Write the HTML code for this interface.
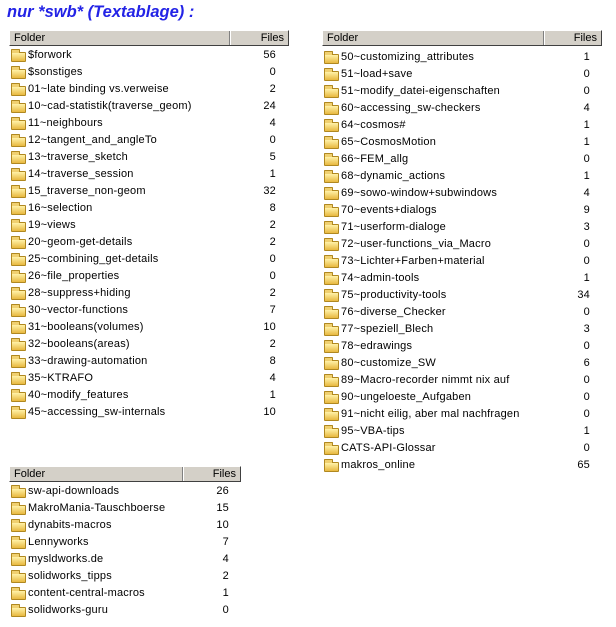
<!DOCTYPE html>
<html><head><style>
body{margin:0;width:616px;height:627px;background:#fff;position:relative;font-family:"Liberation Sans",Tahoma,sans-serif;font-size:11px;color:#000;overflow:hidden}
h1{position:absolute;left:7px;top:3px;margin:0;font:italic bold 16.5px "Liberation Sans",sans-serif;color:#2323e6}
.t{position:absolute}
.hd{height:16px;background:#d4d0c8;border-top:1px solid #fff;border-left:1px solid #fff;border-bottom:1px solid #404040;border-right:1px solid #404040;box-sizing:border-box;position:relative;line-height:14px}
.hd .f{position:absolute;left:4px;top:0}
.hd .n{position:absolute;right:4px;top:0}
.hd .d{position:absolute;top:0;bottom:0;width:1px;background:#808080;border-right:1px solid #fff}
.r{height:17px;line-height:17px;position:relative;white-space:nowrap;letter-spacing:0.2px}
.r i{position:absolute;left:2px;top:5px;width:15px;height:10px;background:linear-gradient(#fff2a8,#e8b840);border:1px solid #b08820;border-radius:1px;box-sizing:border-box}
.r i:before{content:"";position:absolute;left:-1px;top:-4px;width:7px;height:3px;background:#f0d070;border:1px solid #b08820;border-bottom:none;border-radius:1px 1px 0 0}
.r span{position:absolute;left:19px}
.r b{font-weight:normal;position:absolute}
</style></head><body>
<h1>nur *swb* (Textablage) :</h1>

<div class="t" style="left:9px;top:30px;width:280px">
<div class="hd"><span class="f">Folder</span><span class="d" style="left:219px"></span><span class="n">Files</span></div>
<div style="margin-top:1px">
<div class="r"><i></i><span>$forwork</span><b style="right:13px">56</b></div>
<div class="r"><i></i><span>$sonstiges</span><b style="right:13px">0</b></div>
<div class="r"><i></i><span>01~late binding vs.verweise</span><b style="right:13px">2</b></div>
<div class="r"><i></i><span>10~cad-statistik(traverse_geom)</span><b style="right:13px">24</b></div>
<div class="r"><i></i><span>11~neighbours</span><b style="right:13px">4</b></div>
<div class="r"><i></i><span>12~tangent_and_angleTo</span><b style="right:13px">0</b></div>
<div class="r"><i></i><span>13~traverse_sketch</span><b style="right:13px">5</b></div>
<div class="r"><i></i><span>14~traverse_session</span><b style="right:13px">1</b></div>
<div class="r"><i></i><span>15_traverse_non-geom</span><b style="right:13px">32</b></div>
<div class="r"><i></i><span>16~selection</span><b style="right:13px">8</b></div>
<div class="r"><i></i><span>19~views</span><b style="right:13px">2</b></div>
<div class="r"><i></i><span>20~geom-get-details</span><b style="right:13px">2</b></div>
<div class="r"><i></i><span>25~combining_get-details</span><b style="right:13px">0</b></div>
<div class="r"><i></i><span>26~file_properties</span><b style="right:13px">0</b></div>
<div class="r"><i></i><span>28~suppress+hiding</span><b style="right:13px">2</b></div>
<div class="r"><i></i><span>30~vector-functions</span><b style="right:13px">7</b></div>
<div class="r"><i></i><span>31~booleans(volumes)</span><b style="right:13px">10</b></div>
<div class="r"><i></i><span>32~booleans(areas)</span><b style="right:13px">2</b></div>
<div class="r"><i></i><span>33~drawing-automation</span><b style="right:13px">8</b></div>
<div class="r"><i></i><span>35~KTRAFO</span><b style="right:13px">4</b></div>
<div class="r"><i></i><span>40~modify_features</span><b style="right:13px">1</b></div>
<div class="r"><i></i><span>45~accessing_sw-internals</span><b style="right:13px">10</b></div>
</div></div>

<div class="t" style="left:322px;top:30px;width:280px">
<div class="hd"><span class="f">Folder</span><span class="d" style="left:220px"></span><span class="n">Files</span></div>
<div style="margin-top:3px">
<div class="r"><i></i><span>50~customizing_attributes</span><b style="right:12px">1</b></div>
<div class="r"><i></i><span>51~load+save</span><b style="right:12px">0</b></div>
<div class="r"><i></i><span>51~modify_datei-eigenschaften</span><b style="right:12px">0</b></div>
<div class="r"><i></i><span>60~accessing_sw-checkers</span><b style="right:12px">4</b></div>
<div class="r"><i></i><span>64~cosmos#</span><b style="right:12px">1</b></div>
<div class="r"><i></i><span>65~CosmosMotion</span><b style="right:12px">1</b></div>
<div class="r"><i></i><span>66~FEM_allg</span><b style="right:12px">0</b></div>
<div class="r"><i></i><span>68~dynamic_actions</span><b style="right:12px">1</b></div>
<div class="r"><i></i><span>69~sowo-window+subwindows</span><b style="right:12px">4</b></div>
<div class="r"><i></i><span>70~events+dialogs</span><b style="right:12px">9</b></div>
<div class="r"><i></i><span>71~userform-dialoge</span><b style="right:12px">3</b></div>
<div class="r"><i></i><span>72~user-functions_via_Macro</span><b style="right:12px">0</b></div>
<div class="r"><i></i><span>73~Lichter+Farben+material</span><b style="right:12px">0</b></div>
<div class="r"><i></i><span>74~admin-tools</span><b style="right:12px">1</b></div>
<div class="r"><i></i><span>75~productivity-tools</span><b style="right:12px">34</b></div>
<div class="r"><i></i><span>76~diverse_Checker</span><b style="right:12px">0</b></div>
<div class="r"><i></i><span>77~speziell_Blech</span><b style="right:12px">3</b></div>
<div class="r"><i></i><span>78~edrawings</span><b style="right:12px">0</b></div>
<div class="r"><i></i><span>80~customize_SW</span><b style="right:12px">6</b></div>
<div class="r"><i></i><span>89~Macro-recorder nimmt nix auf</span><b style="right:12px">0</b></div>
<div class="r"><i></i><span>90~ungeloeste_Aufgaben</span><b style="right:12px">0</b></div>
<div class="r"><i></i><span>91~nicht eilig, aber mal nachfragen</span><b style="right:12px">0</b></div>
<div class="r"><i></i><span>95~VBA-tips</span><b style="right:12px">1</b></div>
<div class="r"><i></i><span>CATS-API-Glossar</span><b style="right:12px">0</b></div>
<div class="r"><i></i><span>makros_online</span><b style="right:12px">65</b></div>
</div></div>

<div class="t" style="left:9px;top:466px;width:232px">
<div class="hd"><span class="f">Folder</span><span class="d" style="left:172px"></span><span class="n">Files</span></div>
<div style="margin-top:1px">
<div class="r"><i></i><span>sw-api-downloads</span><b style="right:12px">26</b></div>
<div class="r"><i></i><span>MakroMania-Tauschboerse</span><b style="right:12px">15</b></div>
<div class="r"><i></i><span>dynabits-macros</span><b style="right:12px">10</b></div>
<div class="r"><i></i><span>Lennyworks</span><b style="right:12px">7</b></div>
<div class="r"><i></i><span>mysldworks.de</span><b style="right:12px">4</b></div>
<div class="r"><i></i><span>solidworks_tipps</span><b style="right:12px">2</b></div>
<div class="r"><i></i><span>content-central-macros</span><b style="right:12px">1</b></div>
<div class="r"><i></i><span>solidworks-guru</span><b style="right:12px">0</b></div>
</div></div>
</body></html>
